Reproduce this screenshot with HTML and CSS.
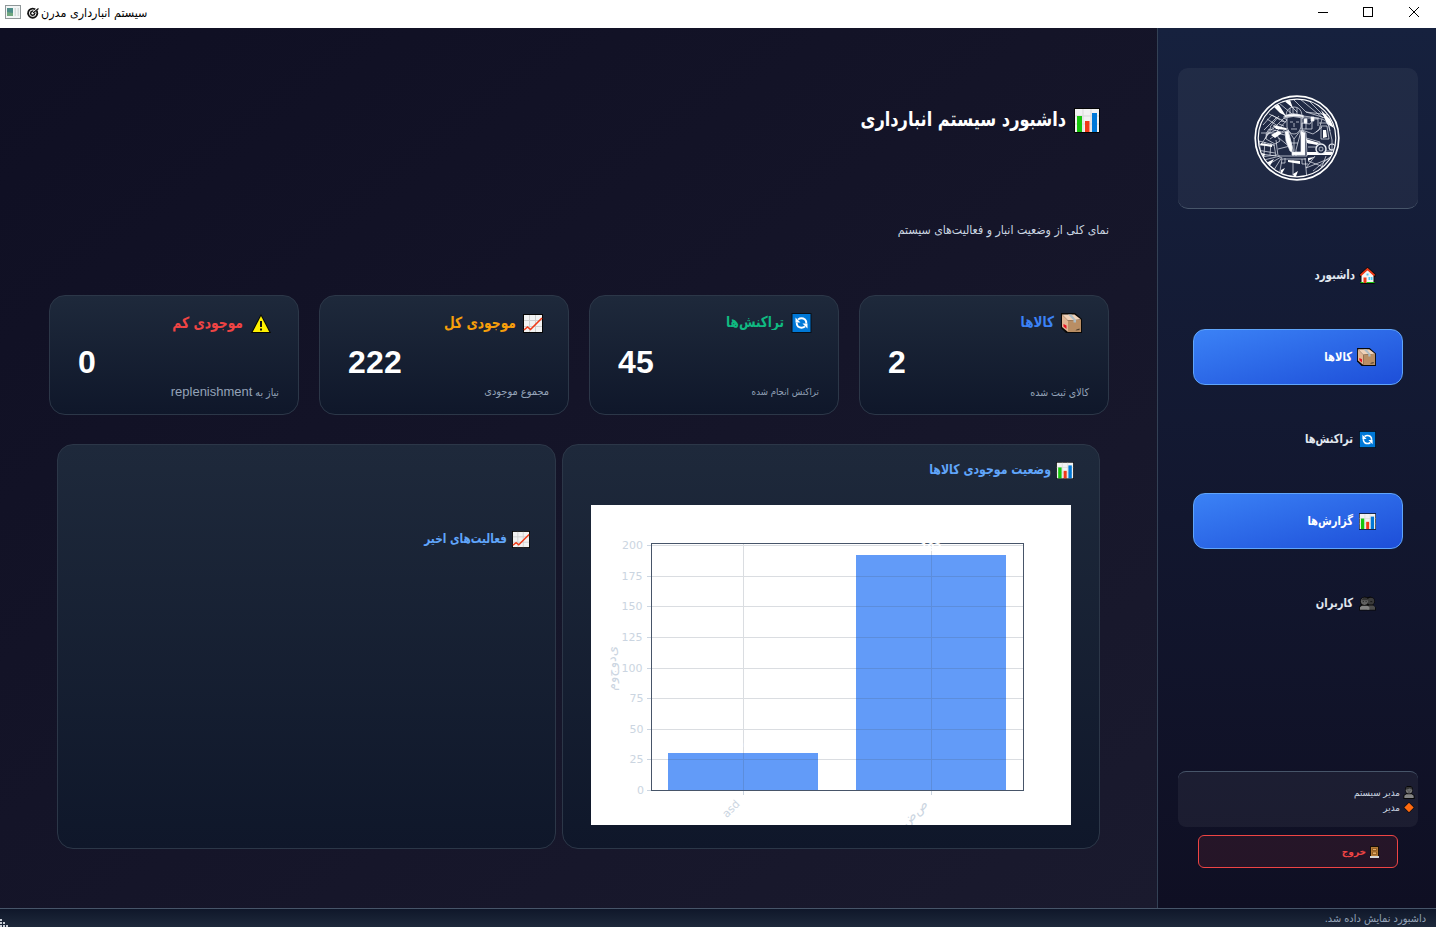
FILE: index.html
```
<!DOCTYPE html>
<html lang="fa">
<head>
<meta charset="utf-8">
<title>سیستم انبارداری مدرن</title>
<link rel="stylesheet" href="styles.css">
</head>
<body>
<svg class="defs" aria-hidden="true">
  <symbol id="chart" viewBox="0 0 26 25"><rect width="26" height="25" fill="#050505"/><rect x="1" y="1" width="24" height="23" fill="#f2f2f2"/><path d="M1 8h24M1 16h24M9 1v23M17 1v23" stroke="#d9d9d9"/><rect x="3" y="8" width="5" height="16" fill="#16c60c"/><rect x="11" y="13" width="4.500" height="11" fill="#f03a17"/><rect x="18" y="5" width="5" height="19" fill="#0078d7"/></symbol>
  <symbol id="trend" viewBox="0 0 20 19"><rect width="20" height="19" fill="#050505"/><rect x="1" y="1" width="18" height="17" fill="#f2f2f2"/><path d="M1 6.500h18M1 12.500h18M6.500 1v17M12.500 1v17" stroke="#cfcfcf"/><path d="M1 16l3.500-3L7.500 15.500 19 4" fill="none" stroke="#f03a17" stroke-width="1.600"/></symbol>
  <symbol id="refresh" viewBox="0 0 20 20"><rect width="20" height="20" fill="#07101a"/><rect x="1" y="1" width="18" height="18" fill="#0078d7"/><path d="M6.500 6.500Q10 4 13.500 6.500Q15 8 14.800 10.500M13.500 13.500Q10 16 6.500 13.500Q5 12 5.200 9.500" fill="none" stroke="#fff" stroke-width="1.900"/><path d="M4 4.500v5h5zM16 15.500v-5h-5z" fill="#fff"/></symbol>
  <symbol id="box" viewBox="0 0 21 20"><path d="M0 0h14l7 6v14H5l-5-5z" fill="#090807"/><path d="M1 1.500h12.500L20 6.500 7 7.500z" fill="#f1d2b8"/><path d="M1 1.500l6 6V19l-6-5z" fill="#e0b593"/><path d="M7 7.500l13-1V19H7z" fill="#b98e64"/><path d="M7 1.500h3.500L15 7v2.500h-2.500V7z" fill="#aebdc4"/><path d="M2.500 11l3 1.500v3.500l-3-2.500z" fill="#e81224"/><path d="M15.500 16.500l3-1V17l-4 .5z" fill="#51402e"/></symbol>
  <symbol id="home" viewBox="0 0 16 17"><path d="M8 0l8 7v3h-1v7H1v-7H0V7z" fill="#080808"/><path d="M2 8l6-5 6 5v8H2z" fill="#f4f4f4"/><path d="M1 8.500l7-6.500 7 6.500" fill="none" stroke="#f03a17" stroke-width="1.800"/><path d="M4 10.500h3V16H4z" fill="#f03a17"/><path d="M9 10h4v3H9zM7 6.500h2v2H7z" fill="#4cc9f5"/><path d="M11 10v3" stroke="#fff" stroke-width=".6"/><path d="M1 15.500h3M7 15.500h8" stroke="#16c60c"/></symbol>
  <symbol id="users" viewBox="0 0 18 15"><path d="M0 15V11l2-2-1-3 1-4 4-2 3 1 3-1 4 2 1 4-2 3 3 3v3z" fill="#090909"/><path d="M8.500 14v-3l2-1.500h4.500l2 1.800V14z" fill="#4c4c4c"/><circle cx="12.500" cy="5" r="3.600" fill="#3b3b3b"/><path d="M1 14v-2.500l2-1.700h6l2 1.700V14z" fill="#838383"/><circle cx="5.800" cy="5.200" r="3.800" fill="#626262"/><path d="M2.500 4l2-2.500h4L9.500 4z" fill="#333"/><path d="M4 5.500h1M7 5.500h1M12 5.500h2" stroke="#151515"/></symbol>
  <symbol id="user" viewBox="0 0 12 14"><path d="M0 14v-4l3-2-1-2V2l2-2h4l2 2v4L9 8l3 2v4z" fill="#080808"/><path d="M1 13v-2.500L3 9h6l2 1.500V13z" fill="#858585"/><circle cx="6" cy="4.500" r="3.500" fill="#737373"/><path d="M2.700 4V2L4 1h4l1.300 1.300V4L7 2.700z" fill="#333"/><path d="M4.300 4.500h1M6.800 4.500h1M5 6.500h2" stroke="#353535" stroke-width=".8"/></symbol>
  <symbol id="diamond" viewBox="0 0 10 10"><path d="M5 0l5 5-5 5-5-5z" fill="#090604"/><path d="M5 .7L9.300 5 5 9.300.7 5z" fill="#ff6a10"/></symbol>
  <symbol id="door" viewBox="0 0 9 12"><rect width="9" height="11" fill="#160e07"/><rect x="1" y="1" width="7" height="9" fill="#b57a35"/><path d="M2.500 2.500h4v2h-4zM2.500 6h4v2.500h-4z" fill="#e3ad66" stroke="#7b4b19" stroke-width=".7"/><path d="M0 10h9v2H0z" fill="#d7d7d7"/></symbol>
  <symbol id="warn" viewBox="0 0 20 19"><path d="M10 0l10 19H0z" fill="#080800"/><path d="M10 2l8.300 16H1.700z" fill="#fff100"/><path d="M10 7v6M10 14.500v2" stroke="#111" stroke-width="2"/></symbol>
</svg>

<header class="titlebar">
  <svg class="app-icon" viewBox="0 0 16 14"><rect x=".5" y=".5" width="15" height="13" fill="#f2f5f5" stroke="#909799"/><rect x="2" y="3" width="6" height="8" fill="#4d8d88"/><path d="M2 7l6 1v3H2z" fill="#70a77f"/><path d="M9.500 3h1.500v8H9.500zM12.500 3h1.500v8h-1.500z" fill="#d6dddd"/></svg>
  <svg class="target" viewBox="0 0 12 12"><circle cx="5.700" cy="6.200" r="5.500" fill="#111"/><circle cx="5.700" cy="6.200" r="3.300" fill="none" stroke="#fff" stroke-width="1"/><circle cx="5.700" cy="6.200" r="1.200" fill="#fff"/><path d="M5.700 6.200L10.500 1.500" stroke="#fff" stroke-width="2"/><path d="M6 6l5.500-4.500" stroke="#111" stroke-width="1.200"/></svg>
  <span class="window-title" dir="rtl">سیستم انبارداری مدرن</span>
  <svg class="window-buttons" viewBox="0 0 102 12" shape-rendering="crispEdges"><path d="M0 6.500h10M45.500 1.500h9v9h-9z" fill="none" stroke="#000"/><path d="M91 1l10 10M101 1L91 11" stroke="#000" shape-rendering="auto"/></svg>
</header>

<div class="workspace">
  <main class="content">
    <h1 class="page-title" dir="rtl"><svg><use href="#chart"/></svg><span>داشبورد سیستم انبارداری</span></h1>
    <p class="page-subtitle" dir="rtl">نمای کلی از وضعیت انبار و فعالیت‌های سیستم</p>

    <section class="stats" dir="rtl">
      <article class="card stat blue"><h2><svg class="wide"><use href="#box"/></svg><span>کالاها</span></h2><strong>2</strong><p>کالای ثبت شده</p></article>
      <article class="card stat green"><h2><svg class="wide"><use href="#refresh"/></svg><span>تراکنش‌ها</span></h2><strong>45</strong><p class="tight">تراکنش انجام شده</p></article>
      <article class="card stat amber"><h2><svg><use href="#trend"/></svg><span>موجودی کل</span></h2><strong>222</strong><p>مجموع موجودی</p></article>
      <article class="card stat red"><h2><svg><use href="#warn"/></svg><span>موجودی کم</span></h2><strong>0</strong><p>نیاز به <span class="latin">replenishment</span></p></article>
    </section>

    <section class="panels" dir="rtl">
      <article class="card panel chart-panel">
        <h3><svg><use href="#chart"/></svg><span>وضعیت موجودی کالاها</span></h3>
        <svg class="plot" viewBox="0 0 480 320" direction="ltr">
          <rect width="480" height="320" fill="#fff"/>
          <g shape-rendering="crispEdges">
            <path d="M77 248h150v37H77zM265 50h150v235H265z" fill="#629bf8"/>
            <path d="M60 254.500h372M60 224.500h372M60 193.500h372M60 163.500h372M60 132.500h372M60 101.500h372M60 71.500h372M60 40.500h372M152.500 38v247M340.500 38v247" stroke="#475569" stroke-opacity=".2" fill="none"/>
            <path d="M56 285.500h4M56 254.500h4M56 224.500h4M56 193.500h4M56 163.500h4M56 132.500h4M56 101.500h4M56 71.500h4M56 40.500h4M152.500 286v4M340.500 286v4" stroke="#cbd5e1"/>
            <path d="M60.500 38.500h372v247h-372z" fill="none" stroke="#475569"/>
          </g>
          <g class="ticks" text-anchor="end">
            <text x="53" y="289">0</text><text x="52.500" y="258">25</text><text x="52.500" y="228">50</text><text x="52.500" y="197">75</text><text x="51.500" y="167">100</text><text x="51.500" y="136">125</text><text x="51.500" y="105">150</text><text x="51.500" y="75">175</text><text x="52" y="44">200</text>
          </g>
          <text class="bar-value" x="152.500" y="244">30</text><text class="bar-value" x="340" y="46">192</text>
          <text class="axis-text" transform="translate(25 186) rotate(-90)">م&#8204;و&#8204;ج&#8204;و&#8204;د&#8204;ی</text>
          <text class="tick-text" transform="translate(149.500 299.500) rotate(-45)" text-anchor="end">asd</text>
          <text class="axis-text" transform="translate(337.500 300) rotate(-45)" text-anchor="end">ب&#8204;ض&#8204;ص</text>
        </svg>
      </article>
      <article class="card panel activity-panel">
        <h3><svg><use href="#trend"/></svg><span>فعالیت‌های اخیر</span></h3>
      </article>
    </section>
  </main>

  <aside class="sidebar">
    <div class="brand">
      <svg viewBox="0 0 86 86">
        <defs><clipPath id="badge"><circle cx="43" cy="43" r="38.500"/></clipPath></defs>
        <g fill="none" stroke="#fff"><circle cx="43" cy="43" r="41.800" stroke-width="1.700"/><circle cx="43" cy="43" r="38.800" stroke-width="1.200"/></g>
        <g clip-path="url(#badge)" stroke="#e9edf3" stroke-width=".7" fill="none">
          <path d="M20 11l12 10M25 8l13 11M31 5l12 12M39 4l13 13 23 3M46 4l23 19M55 6l20 20M15 19l15 7M13 24l14 9M52 17l29 9M49 21l16 2"/>
          <path d="M18 10l8 8 6 3-7-11zM29 5l10 8-3-8zM67 15l9 9 4 9-7-4z" fill="#fff" stroke="none"/>
          <path d="M9 30l9-10 8 5M10 35l13-13M16 32l9-11M11 44l6-12M7 38h14M8 48l12-17"/>
          <path d="M32 20q1-8 8-8 7 0 8 8M30 21q9-4 20 0l-1 2q-10-3-19 0zM39 12v7M36 13v6M43 13v6"/><path d="M31 20.500q9-3 18 0v1.500q-9-2-18 0z" fill="#fff"/>
          <path d="M33 23v9q2 7 7 7t7-7v-9M36 27h3M42 27h3M40 28v4M37 34h6"/>
          <path d="M33 33l-5 4-13-3q-4 4-3 10l9 5 5-3-4-8 9 2M19 34l11-11 3 2-10 11M12 40l10-5M16 44l7-5M27 26l5 1M25 29l5 2"/><path d="M19 30l13 3 1 2-11-1zM17 40l7-4 4 2-7 5z" fill="#fff" stroke="none"/>
          <path d="M48 35l11 4 6-4 3-11-8-1-4 6-8-1v8M48 23h10v11H48zM52 23v11M59 24h5v7M68 24q7 2 8 12M62 37l6-5"/><path d="M50 24h3v4h-3zM57 22h3v4h-3z" fill="#fff"/>
          <path d="M28 38l6-3 6 9 7-9 5 3 1 23H24l-2-16M34 35l5 20v6M47 36l-5 19v6M25 43l12 10M24 54l12-3M40 44v12M37 48h7"/>
          <path d="M31 37l3-1 4 15v6l-2-1-4-10zM47 36l4 2v22H38v-3h9z" fill="#fff"/>
          <path d="M5 46l15 4 2 11-15-2zM6 50h15M11 47l-1 12M17 48l-1 12M3 55l18 3"/><path d="M7 48l11 2v2L6 50zM4 57l7 2-1 3-6-1z" fill="#fff" stroke="none"/>
          <path d="M65 28h9l4 17v11H66M67 31v13h8M67 31h6l2 13M52 43l14 4v11H53M54 48h12M54 52h12"/><path d="M69 35h3l1 7-4 1zM52 44l13 4-2 2-10-2zM53 57h27l-2 3H53z" fill="#fff" stroke="none"/><circle cx="67" cy="54" r="5" fill="#25304b" stroke-width="1.500"/><circle cx="67" cy="54" r="2"/><circle cx="78" cy="52" r="3" stroke-width="1.200"/>
          <path d="M5 62l18-2M6 66l20-5M10 72l17-10M18 78l10-16M28 64l-3 18M51 63l2 22M27 64h25M39 65v15M31 63v5h-4M48 64v5h6M54 66l21 8M61 61l-9 12 27-11M59 76l17-14M72 61l-8 21"/>
          <path d="M8 70l12-6-6 10zM26 82l5-9-4 2zM34 65l12 1v3l-12-2zM39 79l5-3-3 8zM54 63l7-1-7 4z" fill="#fff" stroke="none"/>
        </g>
      </svg>
    </div>
    <nav class="menu" dir="rtl">
      <a class="item first"><svg><use href="#home"/></svg><span>داشبورد</span></a>
      <a class="item active"><svg class="wide"><use href="#box"/></svg><span>کالاها</span></a>
      <a class="item"><svg><use href="#refresh"/></svg><span>تراکنش‌ها</span></a>
      <a class="item active"><svg><use href="#chart"/></svg><span>گزارش‌ها</span></a>
      <a class="item"><svg><use href="#users"/></svg><span>کاربران</span></a>
    </nav>
    <div class="account" dir="rtl">
      <div><svg><use href="#user"/></svg><span>مدیر سیستم</span></div>
      <div><svg><use href="#diamond"/></svg><span>مدیر</span></div>
    </div>
    <a class="logout" dir="rtl"><svg><use href="#door"/></svg><span>خروج</span></a>
  </aside>
</div>

<footer class="statusbar">
  <svg class="grip" viewBox="0 0 8 8" shape-rendering="crispEdges"><path d="M0 0h2v2H0zM0 3h2v2H0zM3 3h2v2H3zM0 6h2v2H0zM3 6h2v2H3zM6 6h2v2H6z" fill="#c9ced6"/></svg>
  <span dir="rtl">داشبورد نمایش داده شد.</span>
</footer>
</body>
</html>
```
FILE: styles.css
```
* { box-sizing: border-box; }
body {
  margin: 0;
  width: 1436px;
  height: 927px;
  overflow: hidden;
  display: flex;
  flex-direction: column;
  background: #0f0f23;
  font-family: "DejaVu Sans Condensed", "DejaVu Sans", sans-serif;
  font-stretch: condensed;
}
h1, h2, h3, p { margin: 0; }
svg { display: block; flex: none; }
.defs { display: none; }

.titlebar {
  height: 28px;
  flex: none;
  display: flex;
  align-items: center;
  padding: 0 16px 4px 5px;
  background: #fff;
  color: #000;
}
.app-icon { width: 16px; height: 14px; }
.target { width: 12px; height: 12px; margin: 2px 2px 0 6px; }
.window-title { font-size: 12.4px; white-space: nowrap; padding-top: 1px; }
.window-buttons { width: 102px; height: 12px; margin-left: auto; }

.workspace { height: 880px; flex: none; display: flex; }
.content {
  width: 1157px;
  padding: 75px 48px 0 49px;
  background: linear-gradient(to bottom right, #0f0f23, #1a1a2e);
}
.page-title {
  height: 34px;
  display: flex;
  align-items: center;
  gap: 8px;
  padding-right: 9px;
  color: #fff;
  font-size: 18px;
}
.page-title svg { width: 26px; height: 25px; }
.page-title span { margin-top: -4px; }
.page-title span, .stat h2 span, .panel h3 span, .item span { transform: scaleY(1.12); }
.page-subtitle {
  margin-top: 83px;
  height: 20px;
  line-height: 20px;
  color: #cbd5e1;
  font-size: 12.2px;
}
.card {
  border: 1px solid #2c3748;
  border-radius: 16px;
  background: linear-gradient(#1e293b, #0f172a);
}
.stats { display: flex; gap: 20px; margin-top: 55px; }
.stat {
  width: 250px;
  height: 120px;
  padding: 15px 19px 0 28px;
  display: flex;
  flex-direction: column;
}
.stat h2 {
  height: 24px;
  display: flex;
  align-items: center;
  gap: 7px;
  padding-right: 7px;
  font-size: 13.7px;
}
.stat h2 svg { width: 20px; height: 19px; }
.stat h2 svg.wide { width: 21px; height: 20px; margin-top: -1px; }
.stat h2 span { margin-top: -3px; }
.blue h2 { color: #3b82f6; font-size: 13.4px; }
.green h2 { color: #10b981; font-size: 13.4px; }
.amber h2 { color: #f59e0b; padding-right: 6px; }
.red h2 { color: #ef4444; padding-right: 8px; }
.red h2 { gap: 8px; }
.stat strong {
  margin-top: 9px;
  height: 36px;
  text-align: left;
  color: #fff;
  font: bold 32px/36px "Liberation Sans", sans-serif;
  letter-spacing: .2px;
}
.stat p { margin-top: 2px; height: 20px; line-height: 20px; color: #94a3b8; font-size: 10.5px; }
.stat p.tight { font-size: 9.6px; }
.amber p { font-size: 10.9px; }
.latin { font: 13px "Liberation Sans", sans-serif; }

.panels { display: flex; gap: 6px; margin-top: 29px; padding: 0 9px 0 8px; }
.panel { height: 405px; color: #60a5fa; }
.chart-panel { width: 538px; padding: 15px 28px 0; }
.activity-panel { width: 499px; padding-top: 84px; padding-right: 25px; }
.panel h3 { height: 21px; display: flex; align-items: center; gap: 5px; font-size: 12.2px; }
.activity-panel h3 { font-size: 11.7px; }
.panel h3 svg { width: 18px; height: 17px; }
.panel h3 span { margin-top: -2px; }
.chart-panel h3 { margin-right: -3px; }
.plot { width: 480px; height: 320px; margin-top: 24px; }
.ticks, .tick-text { font: 11px "DejaVu Sans", sans-serif; fill: #cbd5e1; }
.axis-text { font: 13px "DejaVu Sans", sans-serif; fill: #cbd5e1; direction: ltr; unicode-bidi: bidi-override; }
.bar-value { font: bold 10px "DejaVu Sans", sans-serif; fill: #fff; text-anchor: middle; }

.sidebar {
  width: 279px;
  padding: 40px 18px 0 20px;
  border-left: 1px solid #334155;
  background: linear-gradient(#16213e, #0f0f23);
  display: flex;
  flex-direction: column;
}
.brand {
  height: 141px;
  border-radius: 10px;
  border-bottom: 1px solid #475569;
  background: rgba(255, 255, 255, .05);
  display: flex;
  justify-content: center;
  padding-top: 27px;
  padding-right: 2px;
}
.brand svg { width: 86px; height: 86px; }
.menu { margin: 38px 15px 0; display: flex; flex-direction: column; gap: 26px; }
.item {
  height: 56px;
  display: flex;
  align-items: center;
  gap: 6px;
  padding-right: 26px;
  border: 1px solid transparent;
  border-radius: 12px;
  color: #e2e8f0;
  font-size: 11.1px;
  font-weight: bold;
}
.item.first { gap: 4px; font-size: 11.4px; }
.item.active { border-color: #60a5fa; background: linear-gradient(to bottom right, #3b82f6, #1d4ed8); color: #fff; }
.item svg { width: 17px; height: 17px; }
.item svg.wide { width: 19px; height: 18px; margin-left: -1px; }
.account {
  height: 56px;
  margin-top: 140px;
  padding: 13px 3px 0 0;
  border-top: 1px solid #475569;
  border-radius: 8px;
  background: rgba(255, 255, 255, .05);
  color: #cbd5e1;
  font-size: 9.8px;
}
.account div { display: flex; align-items: center; gap: 3px; height: 15px; }
.account svg { width: 12px; height: 13px; }
.account div + div svg { width: 12px; height: 11px; }
.logout {
  height: 33px;
  margin: 8px 20px 0;
  padding-right: 18px;
  display: flex;
  align-items: center;
  gap: 4px;
  border: 1px solid #ef4444;
  border-radius: 6px;
  background: rgba(239, 68, 68, .1);
  color: #ef4444;
  font-size: 10px;
  font-weight: bold;
}
.logout svg { width: 9px; height: 12px; }

.statusbar {
  height: 19px;
  flex: none;
  display: flex;
  justify-content: space-between;
  align-items: center;
  padding-right: 10px;
  border-top: 1px solid #475569;
  background: linear-gradient(#0f172a, #1e293b);
  color: #94a3b8;
  font-size: 10.9px;
}
.grip { width: 8px; height: 8px; margin-top: 9px; }
```
